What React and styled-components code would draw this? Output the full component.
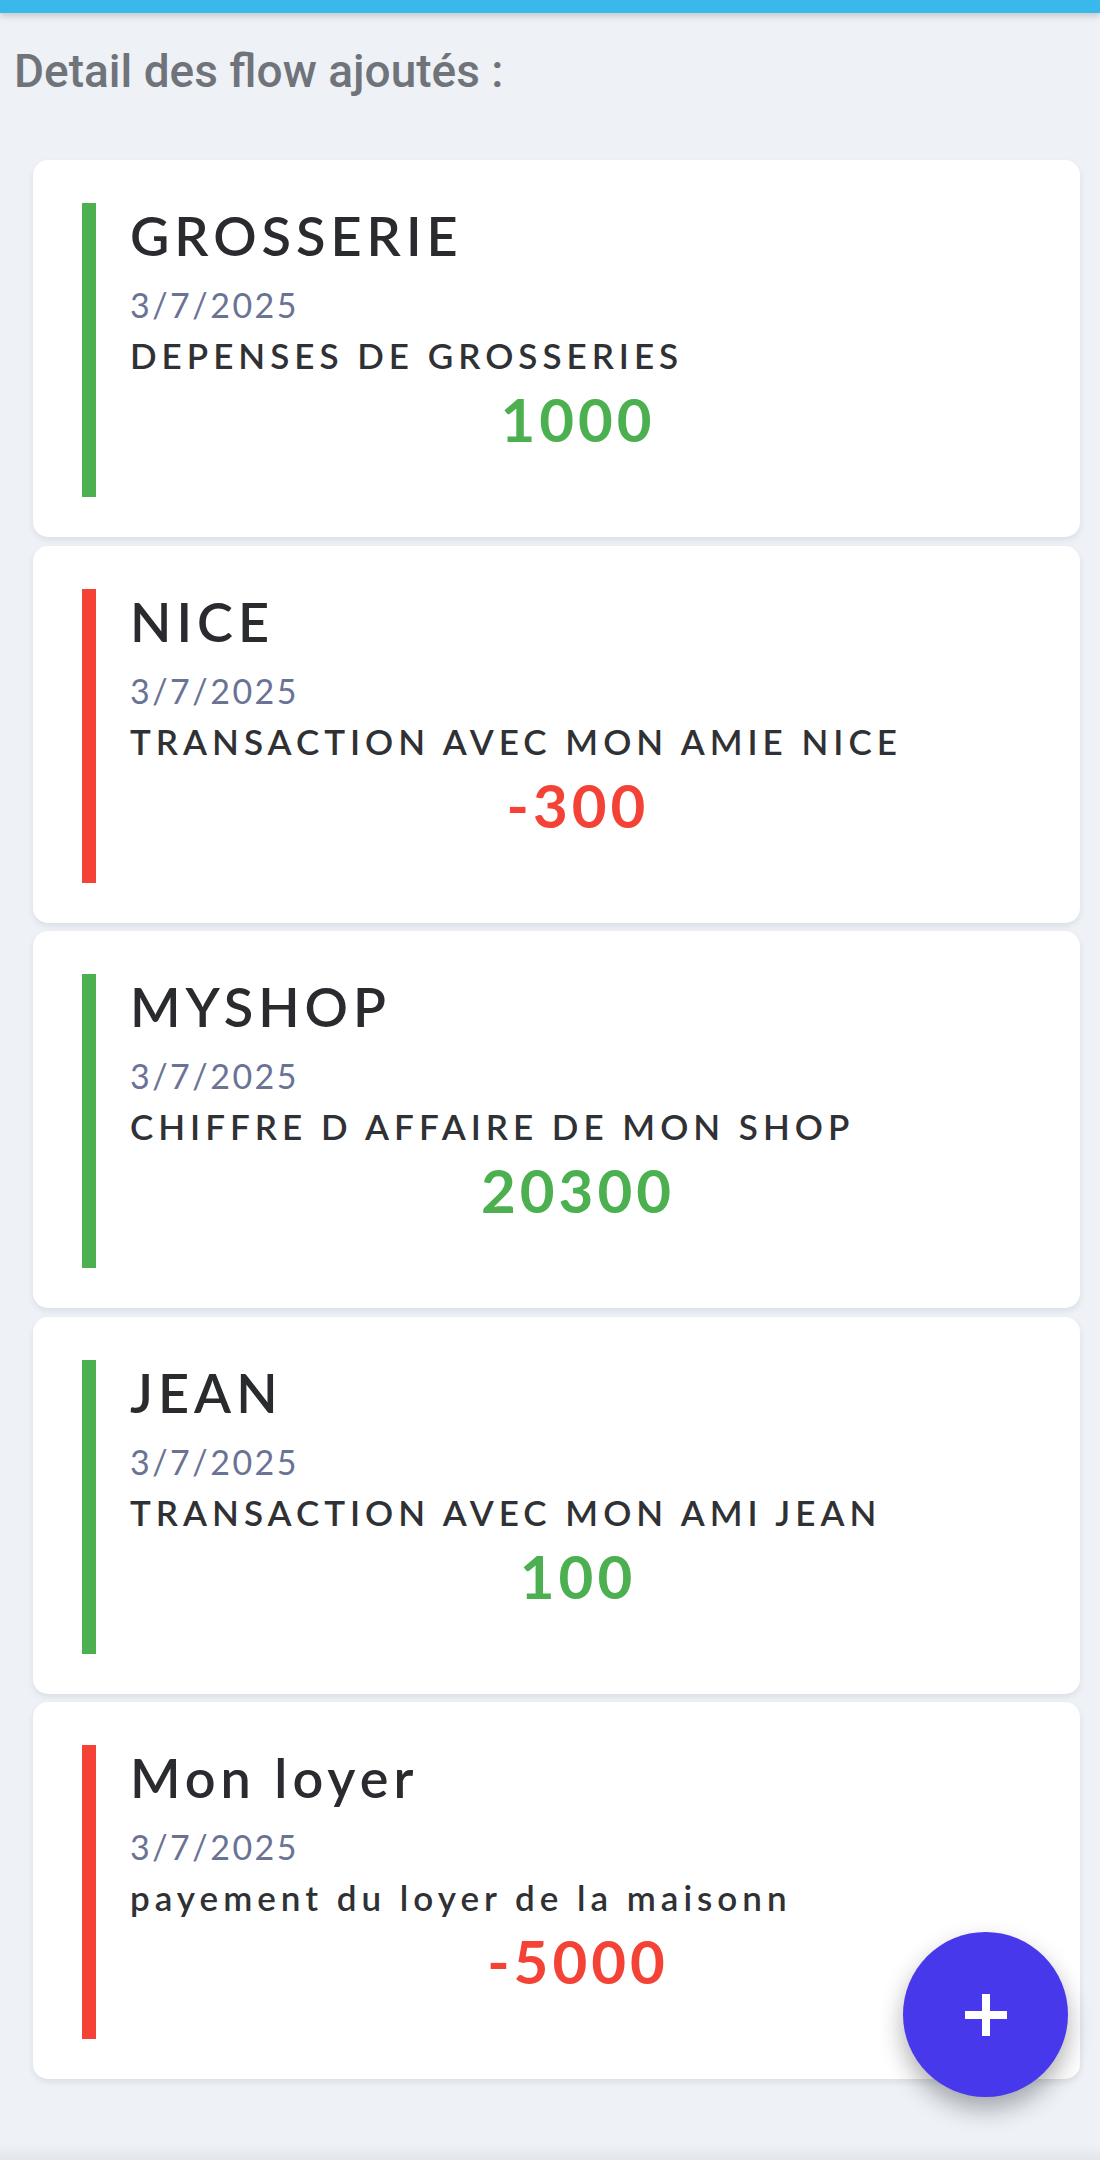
import React from "react";
import styled, { createGlobalStyle } from "styled-components";

const GlobalStyle = createGlobalStyle`
  html, body {
    margin: 0;
    padding: 0;
    background: #eef2f7;
  }
  * { box-sizing: border-box; }
`;

const Page = styled.div`
  position: relative;
  min-height: 2160px;
  display: flex;
  flex-direction: column;
  background: #eef2f7;
  overflow: hidden;
`;

const TopBar = styled.div`
  height: 13px;
  background: #3ab8eb;
  box-shadow: 0 3px 6px rgba(0, 0, 0, 0.18);
`;

const Heading = styled.h2`
  margin: 31px 0 0 14px;
  font-family: Roboto, "Liberation Sans", sans-serif;
  font-weight: 500;
  font-size: 46px;
  line-height: 54px;
  color: #70747a;
`;

const List = styled.div`
  display: flex;
  flex-direction: column;
  gap: 8.5px;
  margin: 62px 20px 0 33px;
`;

const Card = styled.div`
  background: #ffffff;
  border-radius: 15px;
  padding: 43px 54px 40px 49px;
  box-shadow: 0 3px 6px rgba(20, 30, 60, 0.09);
`;

const Accent = styled.div`
  display: flex;
  flex-direction: column;
  border-left: 14px solid ${(p) => p.$color};
  padding: 0 0 42px 34px;
  font-family: Lato, "Noto Sans", sans-serif;
`;

const Title = styled.div`
  font-size: 54px;
  line-height: 65px;
  font-weight: 600;
  letter-spacing: 5px;
  color: #2a2b2e;
  margin-bottom: 17px;
`;

const DateText = styled.div`
  font-size: 34px;
  line-height: 40px;
  font-weight: 400;
  letter-spacing: 2.5px;
  color: #6a7395;
  margin-bottom: 10px;
`;

const Desc = styled.div`
  font-size: 35px;
  line-height: 41px;
  font-weight: 600;
  letter-spacing: 5px;
  color: #303134;
  margin-bottom: 8px;
`;

const Amount = styled.div`
  font-size: 60px;
  line-height: 71px;
  font-weight: 700;
  letter-spacing: 4px;
  text-align: center;
  color: ${(p) => p.$color};
`;

const Fab = styled.button`
  position: absolute;
  left: 903px;
  top: 1932px;
  width: 165px;
  height: 165px;
  border-radius: 50%;
  border: none;
  background: #4838eb;
  display: flex;
  align-items: center;
  justify-content: center;
  padding: 0;
  box-shadow: 0 12px 24px rgba(0, 0, 0, 0.32);
  cursor: pointer;
`;

const BottomEdge = styled.div`
  margin-top: auto;
  height: 16px;
  background: linear-gradient(to bottom, rgba(0, 0, 0, 0), rgba(0, 0, 0, 0.05));
`;

const GREEN = "#4cb050";
const RED = "#f44336";

const flows = [
  { title: "GROSSERIE", date: "3/7/2025", desc: "DEPENSES DE GROSSERIES", amount: "1000", color: GREEN },
  { title: "NICE", date: "3/7/2025", desc: "TRANSACTION AVEC MON AMIE NICE", amount: "-300", color: RED },
  { title: "MYSHOP", date: "3/7/2025", desc: "CHIFFRE D AFFAIRE DE MON SHOP", amount: "20300", color: GREEN },
  { title: "JEAN", date: "3/7/2025", desc: "TRANSACTION AVEC MON AMI JEAN", amount: "100", color: GREEN },
  { title: "Mon loyer", date: "3/7/2025", desc: "payement du loyer de la maisonn", amount: "-5000", color: RED },
];

export default function App() {
  return (
    <>
      <GlobalStyle />
      <Page>
        <TopBar />
        <Heading>Detail des flow ajoutés :</Heading>
        <List>
          {flows.map((f, i) => (
            <Card key={i}>
              <Accent $color={f.color}>
                <Title>{f.title}</Title>
                <DateText>{f.date}</DateText>
                <Desc>{f.desc}</Desc>
                <Amount $color={f.color}>{f.amount}</Amount>
              </Accent>
            </Card>
          ))}
        </List>
        <BottomEdge />
        <Fab aria-label="Ajouter">
          <svg width="50" height="50" viewBox="0 0 50 50">
            <path d="M25 4v42M4 25h42" stroke="#ffffff" strokeWidth="8" strokeLinecap="butt" />
          </svg>
        </Fab>
      </Page>
    </>
  );
}
